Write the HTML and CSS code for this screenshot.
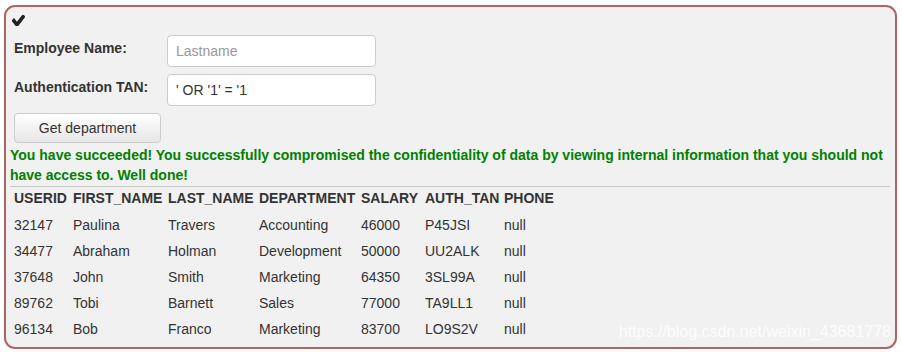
FILE: index.html
```html
<!DOCTYPE html>
<html>
<head>
<meta charset="utf-8">
<link rel="stylesheet" href="styles.css">
</head>
<body>
<div class="panel">
  <div class="check-row">
    <svg class="check" viewBox="128 400 1543 1000" width="13" height="11" preserveAspectRatio="none"><path fill="#222" d="M1671 566q0 40-28 68l-724 724-136 136q-28 28-68 28t-68-28l-136-136-362-362q-28-28-28-68t28-68l136-136q28-28 68-28t68 28l294 295 656-657q28-28 68-28t68 28l136 136q28 28 28 68z"/></svg>
  </div>
  <form class="form">
    <label class="lbl">Employee Name:</label>
    <input class="inp" type="text" placeholder="Lastname">
    <label class="lbl">Authentication TAN:</label>
    <input class="inp" type="text" value="' OR '1' = '1">
    <button class="btn" type="button">Get department</button>
  </form>
  <p class="success">You have succeeded! You successfully compromised the confidentiality of data by viewing internal information that you should not have access to. Well done!</p>
  <hr class="sep">
  <table class="data">
    <colgroup>
      <col class="c1"><col class="c2"><col class="c3"><col class="c4"><col class="c5"><col class="c6"><col class="c7">
    </colgroup>
    <tr class="head"><th>USERID</th><th>FIRST_NAME</th><th>LAST_NAME</th><th>DEPARTMENT</th><th>SALARY</th><th>AUTH_TAN</th><th>PHONE</th></tr>
    <tr><td>32147</td><td>Paulina</td><td>Travers</td><td>Accounting</td><td>46000</td><td>P45JSI</td><td>null</td></tr>
    <tr><td>34477</td><td>Abraham</td><td>Holman</td><td>Development</td><td>50000</td><td>UU2ALK</td><td>null</td></tr>
    <tr><td>37648</td><td>John</td><td>Smith</td><td>Marketing</td><td>64350</td><td>3SL99A</td><td>null</td></tr>
    <tr><td>89762</td><td>Tobi</td><td>Barnett</td><td>Sales</td><td>77000</td><td>TA9LL1</td><td>null</td></tr>
    <tr><td>96134</td><td>Bob</td><td>Franco</td><td>Marketing</td><td>83700</td><td>LO9S2V</td><td>null</td></tr>
  </table>
  <div class="watermark">https://blog.csdn.net/weixin_43681778</div>
</div>
</body>
</html>
```
FILE: styles.css
```css
html, body {
  margin: 0;
  padding: 0;
  background: #ffffff;
}
body {
  font-family: "Liberation Sans", Arial, sans-serif;
  font-size: 14px;
  line-height: 20px;
  color: #333;
}
.panel {
  position: relative;
  margin: 5px 5px 3px 4px;
  border: 2px solid #b26464;
  border-radius: 11px;
  background: #f1f1f1;
  padding: 0 5px 5px 4px;
}
.check-row {
  box-sizing: border-box;
  height: 28px;
  padding: 8px 0 0 2px;
}
.check {
  display: block;
}
.form {
  display: grid;
  grid-template-columns: 153px 209px;
  row-gap: 7px;
  padding-left: 4px;
  margin: 0;
}
.lbl {
  font-weight: bold;
  padding-top: 3px;
  line-height: 20px;
}
.inp {
  box-sizing: border-box;
  height: 32px;
  width: 209px;
  border: 1px solid #ccc;
  border-radius: 4px;
  background: #fff;
  padding: 0 8px;
  font-family: "Liberation Sans", Arial, sans-serif;
  font-size: 14px;
  color: #333;
  margin: 0;
}
.inp::placeholder {
  color: #999;
}
.btn {
  grid-column: 1 / 2;
  box-sizing: border-box;
  width: 147px;
  height: 30px;
  border: 1px solid #ccc;
  border-radius: 4px;
  background: linear-gradient(#ffffff, #e6e6e6);
  font-family: "Liberation Sans", Arial, sans-serif;
  font-size: 14px;
  color: #333;
  margin: 0;
  padding: 0;
}
.success {
  margin: 2px 0 0 0;
  color: #008000;
  font-weight: bold;
  line-height: 20px;
}
.sep {
  margin: 1px 0 0 0;
  border: 0;
  border-top: 1px solid #c8c8c8;
  height: 0;
}
.data {
  border-collapse: collapse;
  table-layout: fixed;
  width: 620px;
}
.c1 { width: 59px; }
.c2 { width: 95px; }
.c3 { width: 91px; }
.c4 { width: 102px; }
.c5 { width: 64px; }
.c6 { width: 79px; }
.c7 { width: 130px; }
.data th, .data td {
  text-align: left;
  padding: 3px 0 3px 4px;
  white-space: nowrap;
  line-height: 20px;
}
.data th {
  padding-top: 1px;
  padding-bottom: 4px;
  font-weight: bold;
}
.watermark {
  position: absolute;
  right: 4px;
  bottom: 5px;
  font-size: 16px;
  line-height: 20px;
  color: rgba(255, 255, 255, 0.9);
}
```
